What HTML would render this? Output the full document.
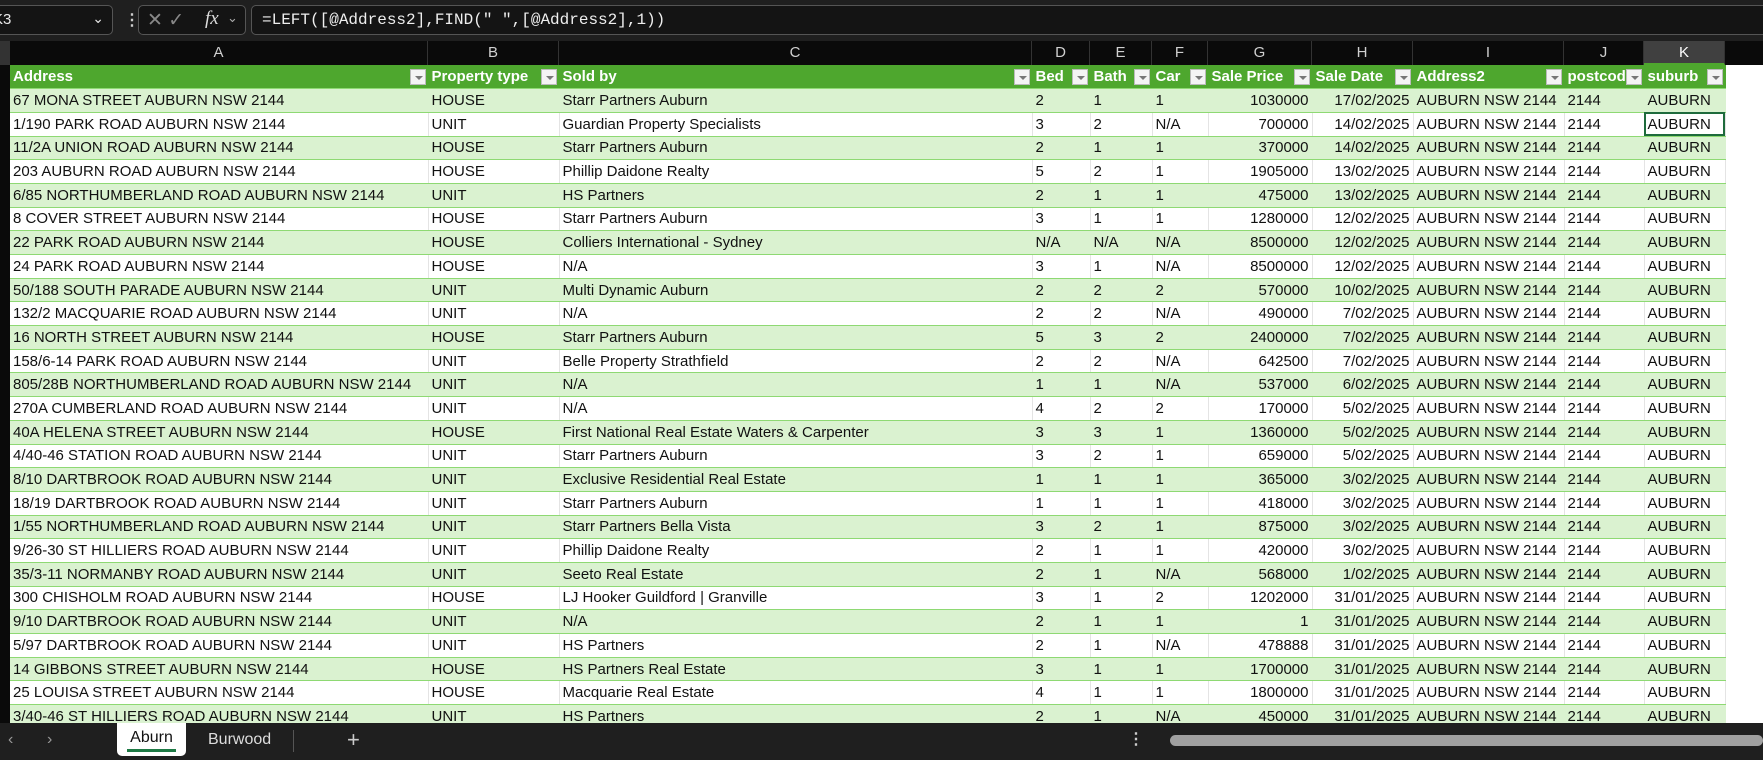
<!DOCTYPE html>
<html><head><meta charset="utf-8"><style>
*{margin:0;padding:0;box-sizing:border-box}
body{width:1763px;height:760px;overflow:hidden;background:#fff;font-family:"Liberation Sans",sans-serif;position:relative}
.fb{position:absolute;left:0;top:0;width:1763px;height:41px;background:#1f1f1f}
.box{position:absolute;top:5px;height:30px;border:1px solid #555;border-radius:5px;background:#141414;color:#e8e8e8}
.ch{position:absolute;top:41px;left:0;width:1763px;height:24px;background:#0a0a0a}
.ch div{position:absolute;top:0;height:24px;line-height:24px;text-align:center;color:#d0d0d0;font-size:15px;border-right:1px solid #333}
.rh{position:absolute;left:0;top:65px;width:10px;height:662px;background:#0a0a0a}
table{position:absolute;left:10px;top:65px;border-collapse:collapse;table-layout:fixed}
td{height:23.7px;font-size:15px;color:#111;padding:0 3px;white-space:nowrap;overflow:hidden;border-bottom:1px solid #8ed973;border-right:1px solid #e4e4e4}
tr.g td{background:#daf2d0;border-right-color:#daf2d0}
tr.h td{background:#4ea72e;color:#fff;font-weight:bold;position:relative;border-right:1px solid #4ea72e}
.r{text-align:right}
.dd{position:absolute;right:2px;top:4px;width:16px;height:16px;background:#f4f4f4;border:1px solid #bbb}
.dd:after{content:"";position:absolute;left:4px;top:6px;border:4px solid transparent;border-top:4px solid #777}
.tb{position:absolute;left:0;top:723px;width:1763px;height:37px;background:#1f1f1f;color:#ddd;font-size:16px}
</style></head><body>
<div class="fb">
<div class="box" style="left:-12px;width:125px;"><span style="position:absolute;left:4px;top:5px;font-size:15px">K3</span><span style="position:absolute;right:8px;top:4px;font-size:14px">&#8964;</span></div>
<div style="position:absolute;left:124px;top:10px;color:#ccc;font-size:16px;font-weight:bold">&#8942;</div>
<div class="box" style="left:138px;width:108px;"><span style="position:absolute;left:8px;top:3px;font-size:19px;color:#888">&#10005; &#10003;</span><span style="position:absolute;left:66px;top:2px;font-size:19px;font-style:italic;font-family:'Liberation Serif',serif;color:#ddd">fx</span><span style="position:absolute;left:88px;top:4px;font-size:13px;color:#aaa">&#8964;</span></div>
<div class="box" style="left:251px;width:1520px;"><span style="position:absolute;left:10px;top:5px;font-size:16px;font-family:'Liberation Mono',monospace;color:#eee">=LEFT([@Address2],FIND(" ",[@Address2],1))</span></div>
</div>
<div class="ch">
<div style="left:0;width:10px;background:#333"></div>
<div style="left:10px;width:418px">A</div>
<div style="left:428px;width:131px">B</div>
<div style="left:559px;width:473px">C</div>
<div style="left:1032px;width:58px">D</div>
<div style="left:1090px;width:62px">E</div>
<div style="left:1152px;width:56px">F</div>
<div style="left:1208px;width:104px">G</div>
<div style="left:1312px;width:101px">H</div>
<div style="left:1413px;width:151px">I</div>
<div style="left:1564px;width:80px">J</div>
<div style="left:1644px;width:81px;background:#404040;color:#fff;border-bottom:2px solid #4ea72e">K</div>
</div>
<div class="rh"></div>
<table>
<colgroup><col style="width:418px"><col style="width:131px"><col style="width:473px"><col style="width:58px"><col style="width:62px"><col style="width:56px"><col style="width:104px"><col style="width:101px"><col style="width:151px"><col style="width:80px"><col style="width:81px"></colgroup>
<tr class="h"><td>Address<span class="dd"></span></td><td>Property type<span class="dd"></span></td><td>Sold by<span class="dd"></span></td><td>Bed<span class="dd"></span></td><td>Bath<span class="dd"></span></td><td>Car<span class="dd"></span></td><td>Sale Price<span class="dd"></span></td><td>Sale Date<span class="dd"></span></td><td>Address2<span class="dd"></span></td><td>postcod<span class="dd"></span></td><td>suburb<span class="dd"></span></td></tr>
<tr class="g"><td>67 MONA STREET AUBURN NSW 2144</td><td>HOUSE</td><td>Starr Partners Auburn</td><td>2</td><td>1</td><td>1</td><td class="r">1030000</td><td class="r">17/02/2025</td><td>AUBURN NSW 2144</td><td>2144</td><td>AUBURN</td></tr>
<tr><td>1/190 PARK ROAD AUBURN NSW 2144</td><td>UNIT</td><td>Guardian Property Specialists</td><td>3</td><td>2</td><td>N/A</td><td class="r">700000</td><td class="r">14/02/2025</td><td>AUBURN NSW 2144</td><td>2144</td><td style="outline:2px solid #1e6b3c;outline-offset:-2px">AUBURN</td></tr>
<tr class="g"><td>11/2A UNION ROAD AUBURN NSW 2144</td><td>HOUSE</td><td>Starr Partners Auburn</td><td>2</td><td>1</td><td>1</td><td class="r">370000</td><td class="r">14/02/2025</td><td>AUBURN NSW 2144</td><td>2144</td><td>AUBURN</td></tr>
<tr><td>203 AUBURN ROAD AUBURN NSW 2144</td><td>HOUSE</td><td>Phillip Daidone Realty</td><td>5</td><td>2</td><td>1</td><td class="r">1905000</td><td class="r">13/02/2025</td><td>AUBURN NSW 2144</td><td>2144</td><td>AUBURN</td></tr>
<tr class="g"><td>6/85 NORTHUMBERLAND ROAD AUBURN NSW 2144</td><td>UNIT</td><td>HS Partners</td><td>2</td><td>1</td><td>1</td><td class="r">475000</td><td class="r">13/02/2025</td><td>AUBURN NSW 2144</td><td>2144</td><td>AUBURN</td></tr>
<tr><td>8 COVER STREET AUBURN NSW 2144</td><td>HOUSE</td><td>Starr Partners Auburn</td><td>3</td><td>1</td><td>1</td><td class="r">1280000</td><td class="r">12/02/2025</td><td>AUBURN NSW 2144</td><td>2144</td><td>AUBURN</td></tr>
<tr class="g"><td>22 PARK ROAD AUBURN NSW 2144</td><td>HOUSE</td><td>Colliers International - Sydney</td><td>N/A</td><td>N/A</td><td>N/A</td><td class="r">8500000</td><td class="r">12/02/2025</td><td>AUBURN NSW 2144</td><td>2144</td><td>AUBURN</td></tr>
<tr><td>24 PARK ROAD AUBURN NSW 2144</td><td>HOUSE</td><td>N/A</td><td>3</td><td>1</td><td>N/A</td><td class="r">8500000</td><td class="r">12/02/2025</td><td>AUBURN NSW 2144</td><td>2144</td><td>AUBURN</td></tr>
<tr class="g"><td>50/188 SOUTH PARADE AUBURN NSW 2144</td><td>UNIT</td><td>Multi Dynamic Auburn</td><td>2</td><td>2</td><td>2</td><td class="r">570000</td><td class="r">10/02/2025</td><td>AUBURN NSW 2144</td><td>2144</td><td>AUBURN</td></tr>
<tr><td>132/2 MACQUARIE ROAD AUBURN NSW 2144</td><td>UNIT</td><td>N/A</td><td>2</td><td>2</td><td>N/A</td><td class="r">490000</td><td class="r">7/02/2025</td><td>AUBURN NSW 2144</td><td>2144</td><td>AUBURN</td></tr>
<tr class="g"><td>16 NORTH STREET AUBURN NSW 2144</td><td>HOUSE</td><td>Starr Partners Auburn</td><td>5</td><td>3</td><td>2</td><td class="r">2400000</td><td class="r">7/02/2025</td><td>AUBURN NSW 2144</td><td>2144</td><td>AUBURN</td></tr>
<tr><td>158/6-14 PARK ROAD AUBURN NSW 2144</td><td>UNIT</td><td>Belle Property Strathfield</td><td>2</td><td>2</td><td>N/A</td><td class="r">642500</td><td class="r">7/02/2025</td><td>AUBURN NSW 2144</td><td>2144</td><td>AUBURN</td></tr>
<tr class="g"><td>805/28B NORTHUMBERLAND ROAD AUBURN NSW 2144</td><td>UNIT</td><td>N/A</td><td>1</td><td>1</td><td>N/A</td><td class="r">537000</td><td class="r">6/02/2025</td><td>AUBURN NSW 2144</td><td>2144</td><td>AUBURN</td></tr>
<tr><td>270A CUMBERLAND ROAD AUBURN NSW 2144</td><td>UNIT</td><td>N/A</td><td>4</td><td>2</td><td>2</td><td class="r">170000</td><td class="r">5/02/2025</td><td>AUBURN NSW 2144</td><td>2144</td><td>AUBURN</td></tr>
<tr class="g"><td>40A HELENA STREET AUBURN NSW 2144</td><td>HOUSE</td><td>First National Real Estate Waters &amp; Carpenter</td><td>3</td><td>3</td><td>1</td><td class="r">1360000</td><td class="r">5/02/2025</td><td>AUBURN NSW 2144</td><td>2144</td><td>AUBURN</td></tr>
<tr><td>4/40-46 STATION ROAD AUBURN NSW 2144</td><td>UNIT</td><td>Starr Partners Auburn</td><td>3</td><td>2</td><td>1</td><td class="r">659000</td><td class="r">5/02/2025</td><td>AUBURN NSW 2144</td><td>2144</td><td>AUBURN</td></tr>
<tr class="g"><td>8/10 DARTBROOK ROAD AUBURN NSW 2144</td><td>UNIT</td><td>Exclusive Residential Real Estate</td><td>1</td><td>1</td><td>1</td><td class="r">365000</td><td class="r">3/02/2025</td><td>AUBURN NSW 2144</td><td>2144</td><td>AUBURN</td></tr>
<tr><td>18/19 DARTBROOK ROAD AUBURN NSW 2144</td><td>UNIT</td><td>Starr Partners Auburn</td><td>1</td><td>1</td><td>1</td><td class="r">418000</td><td class="r">3/02/2025</td><td>AUBURN NSW 2144</td><td>2144</td><td>AUBURN</td></tr>
<tr class="g"><td>1/55 NORTHUMBERLAND ROAD AUBURN NSW 2144</td><td>UNIT</td><td>Starr Partners Bella Vista</td><td>3</td><td>2</td><td>1</td><td class="r">875000</td><td class="r">3/02/2025</td><td>AUBURN NSW 2144</td><td>2144</td><td>AUBURN</td></tr>
<tr><td>9/26-30 ST HILLIERS ROAD AUBURN NSW 2144</td><td>UNIT</td><td>Phillip Daidone Realty</td><td>2</td><td>1</td><td>1</td><td class="r">420000</td><td class="r">3/02/2025</td><td>AUBURN NSW 2144</td><td>2144</td><td>AUBURN</td></tr>
<tr class="g"><td>35/3-11 NORMANBY ROAD AUBURN NSW 2144</td><td>UNIT</td><td>Seeto Real Estate</td><td>2</td><td>1</td><td>N/A</td><td class="r">568000</td><td class="r">1/02/2025</td><td>AUBURN NSW 2144</td><td>2144</td><td>AUBURN</td></tr>
<tr><td>300 CHISHOLM ROAD AUBURN NSW 2144</td><td>HOUSE</td><td>LJ Hooker Guildford | Granville</td><td>3</td><td>1</td><td>2</td><td class="r">1202000</td><td class="r">31/01/2025</td><td>AUBURN NSW 2144</td><td>2144</td><td>AUBURN</td></tr>
<tr class="g"><td>9/10 DARTBROOK ROAD AUBURN NSW 2144</td><td>UNIT</td><td>N/A</td><td>2</td><td>1</td><td>1</td><td class="r">1</td><td class="r">31/01/2025</td><td>AUBURN NSW 2144</td><td>2144</td><td>AUBURN</td></tr>
<tr><td>5/97 DARTBROOK ROAD AUBURN NSW 2144</td><td>UNIT</td><td>HS Partners</td><td>2</td><td>1</td><td>N/A</td><td class="r">478888</td><td class="r">31/01/2025</td><td>AUBURN NSW 2144</td><td>2144</td><td>AUBURN</td></tr>
<tr class="g"><td>14 GIBBONS STREET AUBURN NSW 2144</td><td>HOUSE</td><td>HS Partners Real Estate</td><td>3</td><td>1</td><td>1</td><td class="r">1700000</td><td class="r">31/01/2025</td><td>AUBURN NSW 2144</td><td>2144</td><td>AUBURN</td></tr>
<tr><td>25 LOUISA STREET AUBURN NSW 2144</td><td>HOUSE</td><td>Macquarie Real Estate</td><td>4</td><td>1</td><td>1</td><td class="r">1800000</td><td class="r">31/01/2025</td><td>AUBURN NSW 2144</td><td>2144</td><td>AUBURN</td></tr>
<tr class="g"><td>3/40-46 ST HILLIERS ROAD AUBURN NSW 2144</td><td>UNIT</td><td>HS Partners</td><td>2</td><td>1</td><td>N/A</td><td class="r">450000</td><td class="r">31/01/2025</td><td>AUBURN NSW 2144</td><td>2144</td><td>AUBURN</td></tr>
</table>
<div class="tb">
<span style="position:absolute;left:8px;top:8px;color:#999">&#8249;</span>
<span style="position:absolute;left:47px;top:8px;color:#999">&#8250;</span>
<div style="position:absolute;left:117px;top:0;width:69px;height:33px;background:#fff;border-radius:0 0 5px 5px;color:#111;text-align:center;line-height:30px;font-size:16px">Aburn<div style="position:absolute;left:10px;right:10px;bottom:4px;height:3px;background:#1e7a45"></div></div>
<span style="position:absolute;left:208px;top:8px">Burwood</span>
<div style="position:absolute;left:293px;top:7px;width:1px;height:22px;background:#555"></div>
<span style="position:absolute;left:347px;top:4px;font-size:22px;color:#ccc">+</span>
<span style="position:absolute;left:1128px;top:6px;color:#ccc;font-weight:bold">&#8942;</span>
<div style="position:absolute;left:1170px;top:12px;width:593px;height:11px;background:#a0a0a0;border-radius:6px"></div>
</div>
</body></html>
